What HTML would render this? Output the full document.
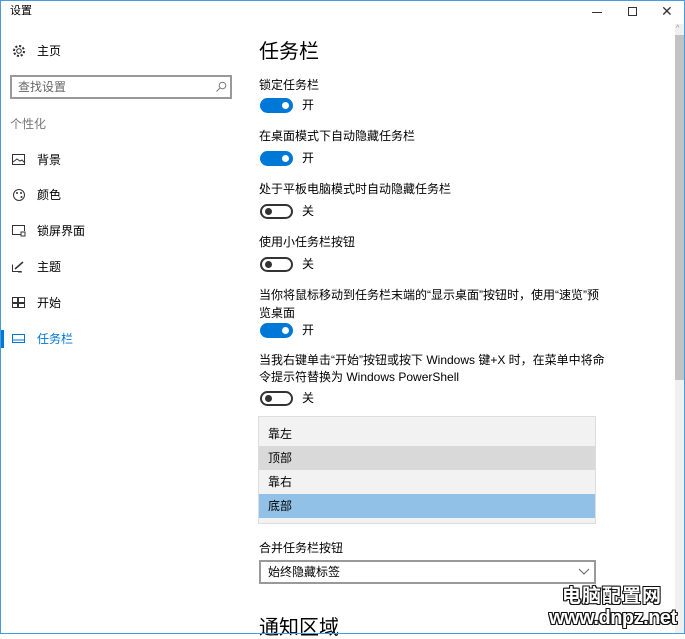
<!DOCTYPE html>
<html><head><meta charset="utf-8"><style>
*{margin:0;padding:0;box-sizing:border-box}
body{width:685px;height:634px;overflow:hidden;background:#fff;font-family:"Liberation Sans","Noto Sans CJK SC",sans-serif;color:#000;position:relative;font-size:12px}
.a{position:absolute;white-space:nowrap;line-height:1}
.frame{position:absolute;left:0;top:0;width:685px;height:634px;border:1px solid #4a9ae0;pointer-events:none}
.tg{position:absolute;left:260px;width:33px;height:15px;border-radius:8px}
.on{background:#0078d7}
.on::after{content:"";position:absolute;right:4px;top:4px;width:7px;height:7px;border-radius:50%;background:#fff}
.off{border:2px solid #333}
.off::after{content:"";position:absolute;left:3px;top:2px;width:7px;height:7px;border-radius:50%;background:#333}
.nav{font-size:12px;color:#000}
.ic{position:absolute;left:12px}
.wm{position:absolute;color:#fff;font-weight:bold;text-shadow:-1px -1px 0 #111,1px -1px 0 #111,-1px 1px 0 #111,1px 1px 0 #111,0 1px 0 #111,0 -1px 0 #111,1px 0 0 #111,-1px 0 0 #111;line-height:1}
</style></head><body>
<div class="a" style="left:10px;top:6px;font-size:11px">设置</div>
<div class="a" style="left:592px;top:12px;width:10px;border-top:1px solid #333"></div>
<div class="a" style="left:628px;top:7px;width:9px;height:9px;border:1px solid #333"></div>
<div class="a" style="left:661px;top:4px;font-size:14px;color:#333">✕</div>

<svg class="ic" style="top:44px" width="14" height="14" viewBox="0 0 14 14"><circle cx="7" cy="7" r="2.3" fill="none" stroke="#333"/><circle cx="7" cy="7" r="5" fill="none" stroke="#333" stroke-dasharray="2.2 1.7" stroke-width="2"/></svg>
<div class="a nav" style="left:37px;top:45px">主页</div>
<div class="a" style="left:10px;top:75px;width:222px;height:24px;border:2px solid #999"></div>
<div class="a" style="left:18px;top:81px;color:#666">查找设置</div>
<svg class="a" style="left:215px;top:81px" width="12" height="12"><circle cx="7.5" cy="4.5" r="3.3" fill="none" stroke="#777"/><path d="M5 7L1.5 10.5" stroke="#777"/></svg>
<div class="a" style="left:10px;top:118px;color:#777">个性化</div>
<svg class="ic" style="top:154px" width="14" height="12"><rect x="0.5" y="0.5" width="12" height="10" fill="none" stroke="#333"/><path d="M1 8l4-3 3 2 2-1 3 3" fill="none" stroke="#333"/></svg>
<div class="a nav" style="left:37px;top:154px">背景</div>
<svg class="ic" style="top:188px" width="14" height="14"><circle cx="7" cy="7" r="5.5" fill="none" stroke="#333"/><circle cx="5" cy="5" r="1" fill="#333"/><circle cx="9" cy="5" r="1" fill="#333"/><circle cx="9.5" cy="9" r="1" fill="#333"/></svg>
<div class="a nav" style="left:37px;top:189px">颜色</div>
<svg class="ic" style="top:225px" width="14" height="12"><path d="M9 9.5H0.5V0.5H12.5V6" fill="none" stroke="#333"/><rect x="9" y="7" width="4" height="4" fill="none" stroke="#333"/></svg>
<div class="a nav" style="left:37px;top:225px">锁屏界面</div>
<svg class="ic" style="top:261px" width="14" height="12"><path d="M0.5 3.5V10.5H9.5" fill="none" stroke="#333"/><path d="M3 8L11 1" stroke="#333" stroke-width="1.5"/><path d="M6 11h4" stroke="#333"/></svg>
<div class="a nav" style="left:37px;top:261px">主题</div>
<svg class="ic" style="top:297px" width="14" height="12"><rect x="0.5" y="0.5" width="5" height="5" fill="none" stroke="#333"/><rect x="0.5" y="6.5" width="5" height="4" fill="none" stroke="#333"/><rect x="6.5" y="0.5" width="6" height="5" fill="none" stroke="#333"/><rect x="6.5" y="6.5" width="6" height="4" fill="none" stroke="#333"/></svg>
<div class="a nav" style="left:37px;top:297px">开始</div>
<div class="a" style="left:1px;top:330px;width:3px;height:18px;background:#0078d7"></div>
<svg class="ic" style="top:334px" width="14" height="10"><rect x="0.5" y="0.5" width="12" height="8" fill="none" stroke="#0078d7"/><path d="M1 6h11" stroke="#0078d7"/></svg>
<div class="a nav" style="left:37px;top:333px;color:#0078d7">任务栏</div>

<div class="a" style="left:259px;top:42px;font-size:20px">任务栏</div>
<div class="a" style="left:259px;top:79px">锁定任务栏</div>
<div class="tg on" style="top:98px"></div><div class="a" style="left:302px;top:99px">开</div>
<div class="a" style="left:259px;top:130px">在桌面模式下自动隐藏任务栏</div>
<div class="tg on" style="top:151px"></div><div class="a" style="left:302px;top:152px">开</div>
<div class="a" style="left:259px;top:183px">处于平板电脑模式时自动隐藏任务栏</div>
<div class="tg off" style="top:204px"></div><div class="a" style="left:302px;top:205px">关</div>
<div class="a" style="left:259px;top:236px">使用小任务栏按钮</div>
<div class="tg off" style="top:257px"></div><div class="a" style="left:302px;top:258px">关</div>
<div class="a" style="left:259px;top:289px">当你将鼠标移动到任务栏末端的“显示桌面”按钮时，使用“速览”预</div>
<div class="a" style="left:259px;top:307px">览桌面</div>
<div class="tg on" style="top:323px"></div><div class="a" style="left:302px;top:324px">开</div>
<div class="a" style="left:259px;top:354px">当我右键单击“开始”按钮或按下 Windows 键+X 时，在菜单中将命</div>
<div class="a" style="left:259px;top:371px">令提示符替换为 Windows PowerShell</div>
<div class="tg off" style="top:391px"></div><div class="a" style="left:302px;top:392px">关</div>

<div class="a" style="left:258px;top:416px;width:338px;height:108px;background:#f2f2f2;border:1px solid #ddd"></div>
<div class="a" style="left:259px;top:446px;width:336px;height:24px;background:#d9d9d9"></div>
<div class="a" style="left:259px;top:494px;width:336px;height:24px;background:#91c1e7"></div>
<div class="a" style="left:268px;top:428px">靠左</div>
<div class="a" style="left:268px;top:452px">顶部</div>
<div class="a" style="left:268px;top:476px">靠右</div>
<div class="a" style="left:268px;top:500px">底部</div>

<div class="a" style="left:259px;top:542px">合并任务栏按钮</div>
<div class="a" style="left:259px;top:560px;width:337px;height:24px;border:2px solid #999"></div>
<div class="a" style="left:268px;top:566px">始终隐藏标签</div>
<svg class="a" style="left:578px;top:568px" width="12" height="8"><path d="M1 1l5 5 5-5" fill="none" stroke="#666"/></svg>
<div class="a" style="left:259px;top:618px;font-size:20px">通知区域</div>

<div class="a" style="left:675px;top:24px;width:9px;height:610px;background:#f0f0f0"></div>
<div class="a" style="left:675px;top:35px;width:9px;height:345px;background:#c2c2c2"></div>
<div class="a" style="left:676px;top:25px;font-size:7px;color:#888">^</div>

<div class="wm" style="left:562px;top:585px;font-size:19px;letter-spacing:1px;font-family:'Noto Sans CJK SC',sans-serif">电脑配置网</div>
<div class="wm" style="left:549px;top:608px;font-size:20px;letter-spacing:-0.5px">www.dnpz.net</div>
<div class="frame"></div>
</body></html>
